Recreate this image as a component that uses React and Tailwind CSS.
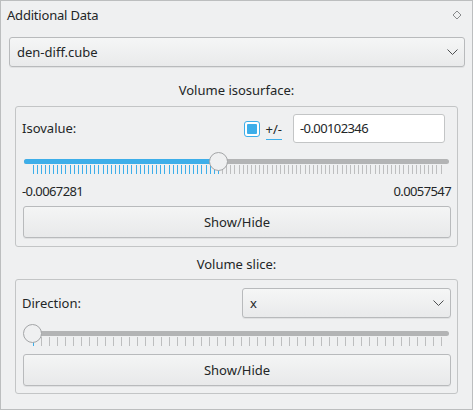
import { useState } from 'react';

const BLUE = '#3daee9';

function Chevron() {
  return (
    <svg width="11" height="6" viewBox="0 0 11 6" className="shrink-0">
      <path d="M0.5 0.5 L5.5 5.5 L10.5 0.5" fill="none" stroke="#4d4f51" strokeWidth="1" />
    </svg>
  );
}

function Combo({ label, className = '' }) {
  return (
    <div
      className={`flex items-center justify-between h-[30px] pl-[7px] pr-[6px] rounded-[3px] border border-[#b8babc] bg-gradient-to-b from-[#f5f6f6] to-[#e9eaeb] shadow-[0_1px_0_rgba(0,0,0,0.06)] ${className}`}
    >
      <span>{label}</span>
      <Chevron />
    </div>
  );
}

function Button({ children }) {
  return (
    <div className="flex items-center justify-center h-[32px] rounded-[3px] border border-[#b8babc] bg-gradient-to-b from-[#f4f5f5] to-[#e8e9ea] shadow-[0_1px_0_rgba(0,0,0,0.06)]">
      {children}
    </div>
  );
}

function Slider({ value, ticks }) {
  const travel = 408;
  const hx = value * travel;
  const step = travel / (ticks - 1);
  return (
    <div className="relative h-[23px] w-[427px]">
      <div className="absolute left-[1px] right-[1px] top-[7px] h-[5px] rounded-full bg-[#b3b4b5]" />
      {value > 0 && (
        <div
          className="absolute left-[1px] top-[7px] h-[5px] rounded-full bg-[#3daee9]"
          style={{ width: hx + 9 }}
        />
      )}
      <svg className="absolute left-0 top-[13px]" width="427" height="9">
        {Array.from({ length: ticks }).map((_, i) => {
          const x = Math.round(9.5 + i * step) + 0.5;
          return (
            <line
              key={i}
              x1={x}
              x2={x}
              y1="0"
              y2="9"
              stroke={9.5 + i * step <= hx + 9.5 ? BLUE : '#bdbebf'}
              strokeWidth="1"
            />
          );
        })}
      </svg>
      <div
        className="absolute top-0 h-[19px] w-[19px] rounded-full border border-[#a3a5a7] bg-[#eff0f1]"
        style={{ left: hx }}
      />
    </div>
  );
}

export default function App() {
  const [iso] = useState('-0.00102346');

  return (
    <div className="w-[473px] h-[410px] border border-[#bcbebf] bg-[#eff0f1] text-[13px] leading-none text-[#232627] font-['Noto_Sans',sans-serif] overflow-hidden">
      <div className="flex items-center justify-between h-[28px] pl-[6px] pr-[10px]">
        <span className="tracking-[-0.2px]">Additional Data</span>
        <svg width="10" height="10" viewBox="0 0 10 10">
          <path d="M5 1 L9 5 L5 9 L1 5 Z" fill="none" stroke="#7c7e80" strokeWidth="0.9" />
        </svg>
      </div>

      <Combo label="den-diff.cube" className="mt-[8px] ml-[8px] w-[456px]" />

      <div className="flex items-center justify-center h-[18px] mt-[14px]">Volume isosurface:</div>

      <div className="mt-[7px] ml-[14px] w-[443px] h-[141px] rounded-[3px] border border-[#c3c5c6] pt-[7px] pl-[7px] pr-[6px]">
        <div className="flex items-center h-[29px]">
          <span className="flex-1 -ml-px">Isovalue:</span>
          <div className="flex items-center justify-center w-[16px] h-[16px] rounded-[3px] border border-[#3daee9] bg-white">
            <div className="w-[10px] h-[10px] rounded-[1px] bg-[#3daee9]" />
          </div>
          <span className="ml-[6px] pb-[3px] border-b border-[#3daee9] mt-[5px]">+/-</span>
          <div className="ml-[11px] mr-[6px] flex items-center w-[152px] h-[29px] rounded-[3px] border border-[#c3c5c6] bg-white pl-[6px] tracking-[-0.6px]">
            {iso}
          </div>
        </div>

        <div className="mt-[9px]">
          <Slider value={0.4565} ticks={100} />
        </div>

        <div className="flex items-center justify-between h-[16px] mt-[8px] -ml-px tracking-[-0.6px]">
          <span>-0.0067281</span>
          <span>0.0057547</span>
        </div>

        <div className="mt-[7px]">
          <Button>Show/Hide</Button>
        </div>
      </div>

      <div className="flex items-center justify-center h-[18px] mt-[8px]">Volume slice:</div>

      <div className="mt-[6px] ml-[14px] w-[443px] h-[115px] rounded-[3px] border border-[#c3c5c6] pt-[8px] pl-[7px] pr-[6px]">
        <div className="flex items-center h-[30px]">
          <span className="flex-1 -ml-px">Direction:</span>
          <Combo label="x" className="w-[209px]" />
        </div>

        <div className="mt-[6px]">
          <Slider value={0} ticks={52} />
        </div>

        <div className="mt-[7px]">
          <Button>Show/Hide</Button>
        </div>
      </div>
    </div>
  );
}
